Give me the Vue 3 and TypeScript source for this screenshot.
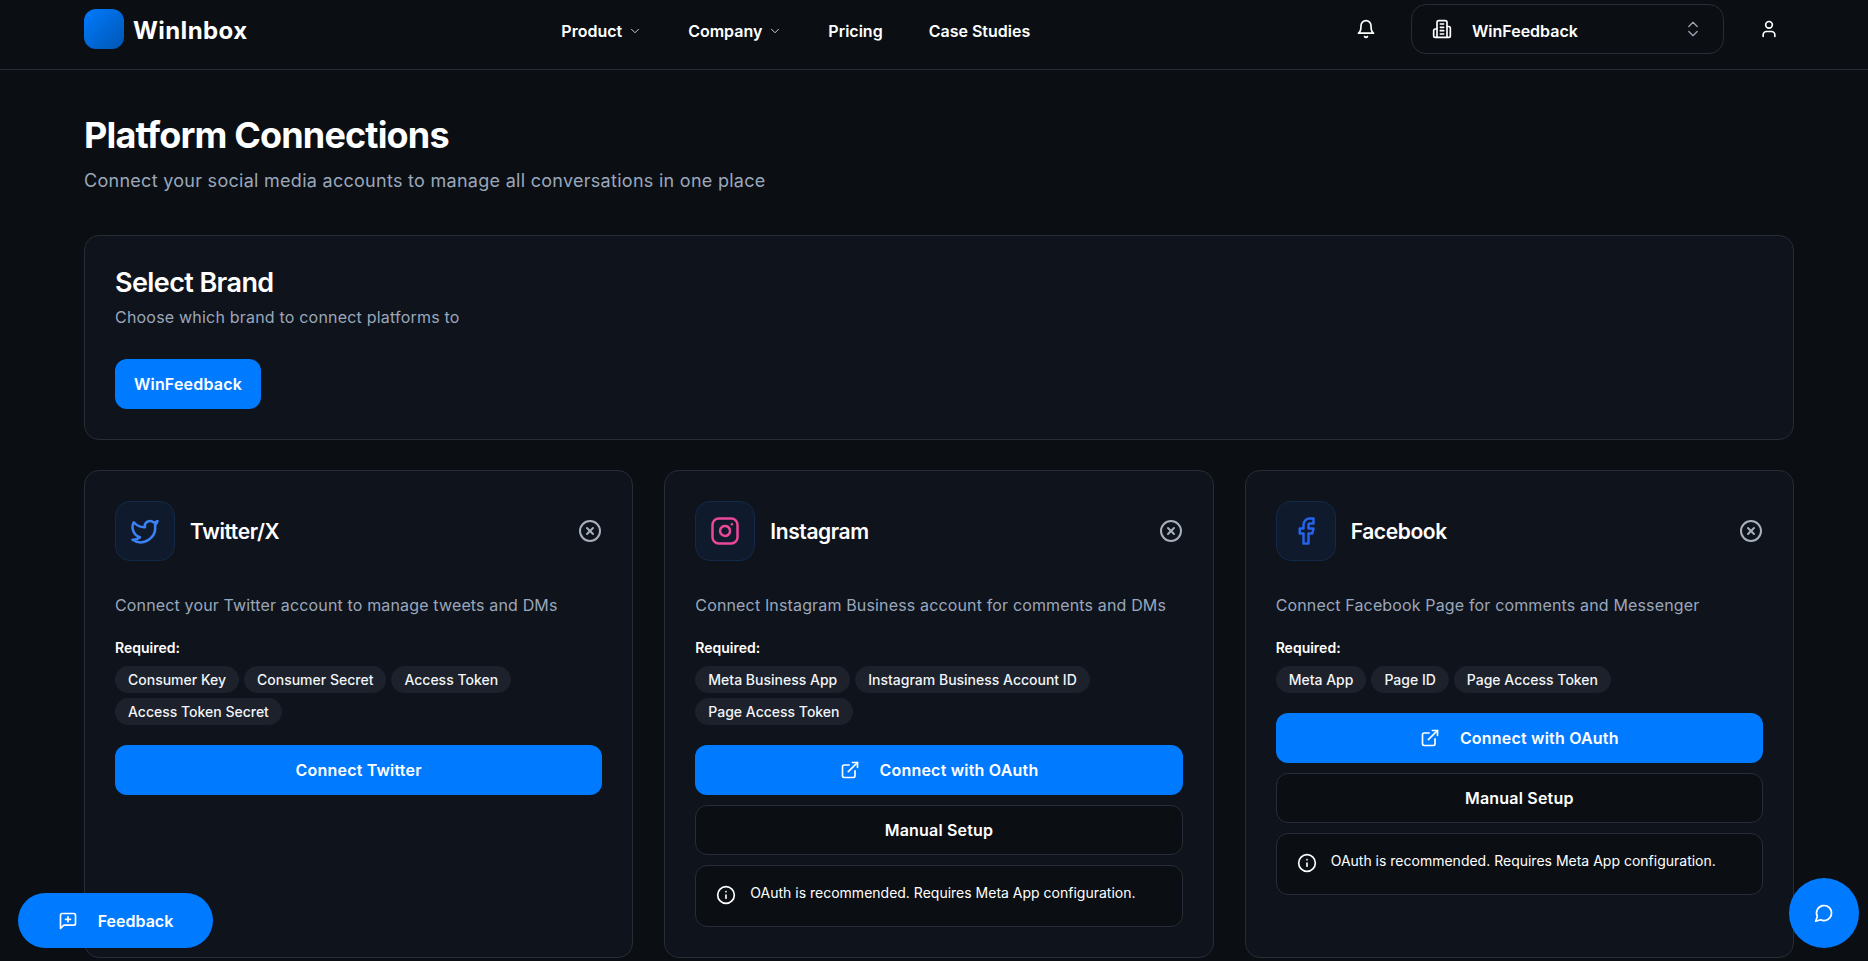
<script setup lang="ts">
interface Platform {
  name: string
  icon: 'twitter' | 'instagram' | 'facebook'
  desc: string
  required: string[]
  oauth: boolean
  primary?: string
}

const navItems = [
  { label: 'Product', caret: true },
  { label: 'Company', caret: true },
  { label: 'Pricing', caret: false },
  { label: 'Case Studies', caret: false },
]

const platforms: Platform[] = [
  {
    name: 'Twitter/X',
    icon: 'twitter',
    desc: 'Connect your Twitter account to manage tweets and DMs',
    required: ['Consumer Key', 'Consumer Secret', 'Access Token', 'Access Token Secret'],
    oauth: false,
    primary: 'Connect Twitter',
  },
  {
    name: 'Instagram',
    icon: 'instagram',
    desc: 'Connect Instagram Business account for comments and DMs',
    required: ['Meta Business App', 'Instagram Business Account ID', 'Page Access Token'],
    oauth: true,
  },
  {
    name: 'Facebook',
    icon: 'facebook',
    desc: 'Connect Facebook Page for comments and Messenger',
    required: ['Meta App', 'Page ID', 'Page Access Token'],
    oauth: true,
  },
]
</script>

<template>
  <div class="page">
    <header class="topbar">
      <div class="topbar__inner">
        <div class="brand">
          <div class="brand__mark" />
          <span class="brand__name">WinInbox</span>
        </div>
        <nav class="nav">
          <a v-for="item in navItems" :key="item.label" class="nav__item">
            {{ item.label }}
            <svg v-if="item.caret" class="nav__caret" width="14" height="14" viewBox="0 0 24 24" fill="none" stroke="currentColor" stroke-width="2" stroke-linecap="round" stroke-linejoin="round"><path d="m6 9 6 6 6-6" /></svg>
          </a>
        </nav>
        <div class="tools">
          <svg class="icon" width="20" height="20" viewBox="0 0 24 24"><path d="M6 8a6 6 0 0 1 12 0c0 7 3 9 3 9H3s3-2 3-9" /><path d="M10.3 21a1.94 1.94 0 0 0 3.4 0" /></svg>
          <div class="switcher">
            <svg class="icon" width="20" height="20" viewBox="0 0 24 24"><path d="M6 22V4a2 2 0 0 1 2-2h8a2 2 0 0 1 2 2v18Z" /><path d="M6 12H4a2 2 0 0 0-2 2v6a2 2 0 0 0 2 2h2" /><path d="M18 9h2a2 2 0 0 1 2 2v9a2 2 0 0 1-2 2h-2" /><path d="M10 6h4" /><path d="M10 10h4" /><path d="M10 14h4" /><path d="M10 18h4" /></svg>
            <span class="switcher__label">WinFeedback</span>
            <svg class="icon switcher__arrows" width="20" height="20" viewBox="0 0 24 24"><path d="m7 15 5 5 5-5" /><path d="m7 9 5-5 5 5" /></svg>
          </div>
          <svg class="icon" width="20" height="20" viewBox="0 0 24 24"><path d="M19 21v-2a4 4 0 0 0-4-4H9a4 4 0 0 0-4 4v2" /><circle cx="12" cy="7" r="4" /></svg>
        </div>
      </div>
    </header>

    <main class="main">
      <h1 class="main__title">Platform Connections</h1>
      <p class="main__sub">Connect your social media accounts to manage all conversations in one place</p>

      <section class="panel">
        <h2 class="panel__title">Select Brand</h2>
        <p class="panel__sub">Choose which brand to connect platforms to</p>
        <button class="btn btn--primary panel__btn">WinFeedback</button>
      </section>

      <section class="grid">
        <article v-for="p in platforms" :key="p.name" class="card">
          <div class="card__head">
            <div class="card__icon" :class="`card__icon--${p.icon}`">
              <svg v-if="p.icon === 'twitter'" class="icon" width="30" height="30" viewBox="0 0 24 24"><path d="M22 4s-.7 2.1-2 3.4c1.6 10-9.4 17.3-18 11.6 2.2.1 4.4-.6 6-2C3 15.5.5 9.6 3 5c2.2 2.6 5.6 4.1 9 4-.9-4.2 4-6.6 7-3.8 1.1 0 3-1.2 3-1.2z" /></svg>
              <svg v-else-if="p.icon === 'instagram'" class="icon" width="30" height="30" viewBox="0 0 24 24"><rect x="2" y="2" width="20" height="20" rx="5" ry="5" /><path d="M16 11.37A4 4 0 1 1 12.63 8 4 4 0 0 1 16 11.37z" /><line x1="17.5" y1="6.5" x2="17.51" y2="6.5" /></svg>
              <svg v-else class="icon" width="30" height="30" viewBox="0 0 24 24"><path d="M18 2h-3a5 5 0 0 0-5 5v3H7v4h3v8h4v-8h3l1-4h-4V7a1 1 0 0 1 1-1h3z" /></svg>
            </div>
            <h3 class="card__name">{{ p.name }}</h3>
            <svg class="icon card__status" width="24" height="24" viewBox="0 0 24 24"><circle cx="12" cy="12" r="10" /><path d="m15 9-6 6" /><path d="m9 9 6 6" /></svg>
          </div>
          <p class="card__desc">{{ p.desc }}</p>
          <div class="card__req-label">Required:</div>
          <div class="chips">
            <span v-for="r in p.required" :key="r" class="chip">{{ r }}</span>
          </div>
          <div class="card__actions">
            <button v-if="p.primary" class="btn btn--primary">{{ p.primary }}</button>
            <template v-if="p.oauth">
              <button class="btn btn--primary">
                <svg class="icon" width="20" height="20" viewBox="0 0 24 24"><path d="M18 13v6a2 2 0 0 1-2 2H5a2 2 0 0 1-2-2V8a2 2 0 0 1 2-2h6" /><polyline points="15 3 21 3 21 9" /><line x1="10" y1="14" x2="21" y2="3" /></svg>
                Connect with OAuth
              </button>
              <button class="btn btn--outline">Manual Setup</button>
              <div class="note">
                <svg class="icon note__icon" width="20" height="20" viewBox="0 0 24 24"><circle cx="12" cy="12" r="10" /><path d="M12 16v-4" /><path d="M12 8h.01" /></svg>
                <span class="note__text">OAuth is recommended. Requires Meta App configuration.</span>
              </div>
            </template>
          </div>
        </article>
      </section>
    </main>

    <button class="feedback">
      <svg class="icon" width="20" height="20" viewBox="0 0 24 24"><path d="M21 15a2 2 0 0 1-2 2H7l-4 4V5a2 2 0 0 1 2-2h14a2 2 0 0 1 2 2z" /><path d="M12 7v6" /><path d="M9 10h6" /></svg>
      Feedback
    </button>
    <button class="chat">
      <svg class="icon" width="20" height="20" viewBox="0 0 24 24"><path d="M7.9 20A9 9 0 1 0 4 16.1L2 22Z" /></svg>
    </button>
  </div>
</template>

<style scoped>
.page {
  min-height: 961px;
  background: #0b0f14;
  color: #fff;
  font-family: Inter, "Noto Sans", sans-serif;
}

.icon {
  fill: none;
  stroke: currentColor;
  stroke-width: 2;
  stroke-linecap: round;
  stroke-linejoin: round;
  flex: none;
}

.topbar {
  border-bottom: 1px solid #272c38;
}

.topbar__inner {
  display: flex;
  align-items: center;
  justify-content: space-between;
  padding: 4px 89px 15px 84px;
}

.brand {
  display: flex;
  align-items: center;
  gap: 9px;
}

.brand__mark {
  width: 40px;
  height: 40px;
  border-radius: 12px;
  background: linear-gradient(135deg, #007bff 0%, #0056b3 100%);
}

.brand__name {
  padding-top: 3px;
  font-size: 24px;
  font-weight: 700;
  letter-spacing: 0.4px;
}

.nav {
  display: flex;
  gap: 46px;
  margin-right: 12px;
  padding-top: 3px;
}

.nav__item {
  display: flex;
  align-items: center;
  gap: 6px;
  font-size: 16px;
  font-weight: 600;
}

.nav__caret {
  color: #d5d9e0;
  stroke-width: 1.6;
}

.tools {
  display: flex;
  align-items: center;
}

.switcher {
  width: 313px;
  height: 50px;
  box-sizing: border-box;
  margin: 0 35px;
  padding: 0 20px;
  border: 1px solid #272c38;
  border-radius: 15px;
  display: flex;
  align-items: center;
  gap: 20px;
}

.switcher__label {
  flex: 1;
  padding-top: 3px;
  font-size: 16px;
  font-weight: 600;
}

.switcher__arrows {
  color: #9aa3b2;
  stroke-width: 1.6;
}

.main {
  padding: 38px 74px 0 84px;
}

.main__title {
  margin: 0;
  font-size: 36px;
  line-height: 54px;
  font-weight: 700;
  letter-spacing: -0.85px;
}

.main__sub {
  margin: 5px 0 0;
  font-size: 18px;
  line-height: 27px;
  color: #9aa7bb;
  letter-spacing: 0.28px;
}

.panel {
  margin-top: 41px;
  padding: 30px;
  border: 1px solid #272c38;
  border-radius: 15px;
  background: #0f131b;
}

.panel__title {
  margin: 0;
  font-size: 27px;
  line-height: 34px;
  font-weight: 600;
  letter-spacing: -0.6px;
}

.panel__sub {
  margin: 5px 0 0;
  font-size: 16px;
  line-height: 24px;
  color: #9aa7bb;
  letter-spacing: 0.2px;
}

.panel__btn {
  margin-top: 30px;
  width: 146px;
}

.grid {
  margin-top: 30px;
  display: grid;
  grid-template-columns: repeat(3, 1fr);
  gap: 31px;
}

.card {
  padding: 30px;
  border: 1px solid #272c38;
  border-radius: 15px;
  background: #0f131b;
  min-width: 0;
}

.card__head {
  display: flex;
  align-items: center;
  gap: 15px;
}

.card__icon {
  width: 60px;
  height: 60px;
  box-sizing: border-box;
  border: 1px solid #12294a;
  border-radius: 15px;
  background: #0f1b2d;
  display: flex;
  align-items: center;
  justify-content: center;
}

.card__icon--twitter {
  color: #3b82f6;
}

.card__icon--instagram {
  color: #ec4899;
}

.card__icon--facebook {
  color: #2563eb;
}

.card__name {
  flex: 1;
  margin: 0;
  font-size: 21px;
  font-weight: 600;
  letter-spacing: -0.4px;
}

.card__status {
  color: #a8b0bd;
}

.card__desc {
  margin: 32px 0 0;
  font-size: 16px;
  line-height: 24px;
  color: #9aa7bb;
  letter-spacing: 0.15px;
}

.card__req-label {
  margin-top: 20px;
  font-size: 14px;
  line-height: 21px;
  font-weight: 600;
}

.chips {
  margin-top: 8px;
  display: flex;
  flex-wrap: wrap;
  gap: 5px;
}

.chip {
  height: 27px;
  padding: 0 13px;
  border-radius: 14px;
  background: #1c212b;
  font-size: 14px;
  font-weight: 500;
  line-height: 27px;
  color: #f1f5f9;
}

.card__actions {
  margin-top: 20px;
  display: flex;
  flex-direction: column;
  gap: 10px;
}

.btn {
  height: 50px;
  box-sizing: border-box;
  border-radius: 12px;
  display: flex;
  align-items: center;
  justify-content: center;
  gap: 20px;
  font-family: inherit;
  font-size: 16px;
  font-weight: 600;
  letter-spacing: 0.2px;
  color: #fff;
}

.btn--primary {
  border: 0;
  background: #007bff;
}

.btn--outline {
  border: 1px solid #272c38;
  background: #0b0f14;
}

.note {
  display: flex;
  align-items: flex-start;
  gap: 14px;
  padding: 15px 20px 21px;
  border: 1px solid #272c38;
  border-radius: 12px;
  background: #0b0f14;
}

.note__icon {
  margin-top: 4px;
}

.note__text {
  font-size: 14px;
  line-height: 23px;
}

.feedback {
  position: fixed;
  left: 18px;
  bottom: 13px;
  width: 195px;
  height: 55px;
  border: 0;
  border-radius: 28px;
  background: #007bff;
  color: #fff;
  display: flex;
  align-items: center;
  justify-content: center;
  gap: 20px;
  font-family: inherit;
  font-size: 16px;
  font-weight: 600;
}

.chat {
  position: fixed;
  right: 9px;
  bottom: 13px;
  width: 70px;
  height: 70px;
  border: 0;
  border-radius: 50%;
  background: #007bff;
  color: #fff;
  display: flex;
  align-items: center;
  justify-content: center;
}
</style>

<style>
html,
body {
  margin: 0;
  background: #0b0f14;
  overflow: hidden;
}
</style>
